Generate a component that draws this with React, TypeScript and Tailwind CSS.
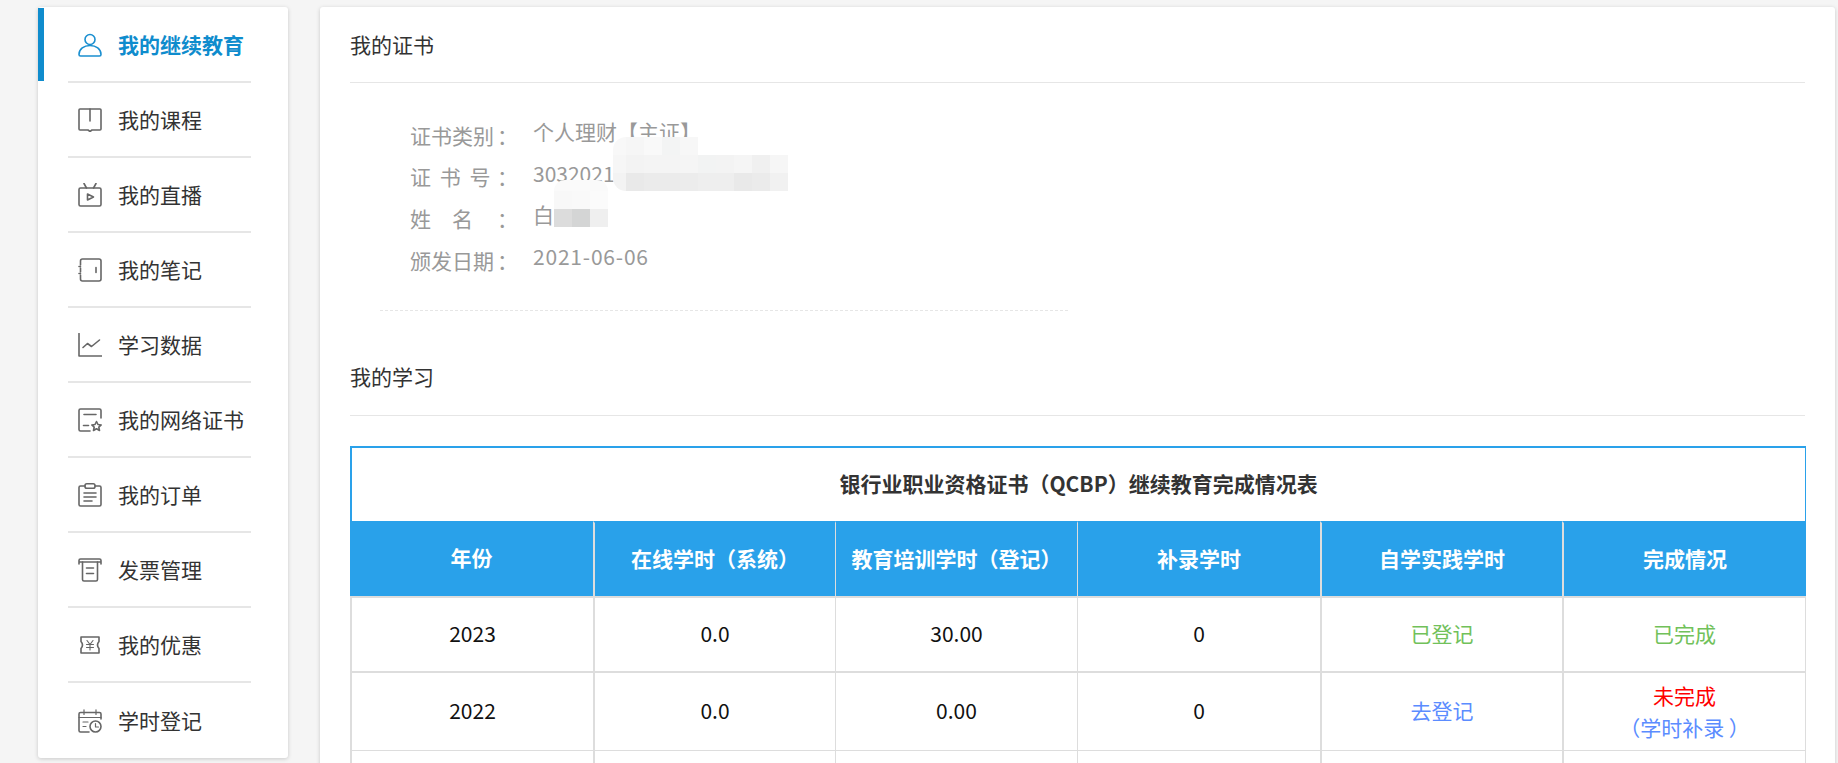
import type { ReactNode } from "react";

const ICON = "#666666";

function Icon({ color = ICON, children }: { color?: string; children: ReactNode }) {
  return (
    <svg width="24" height="24" viewBox="0 0 24 24" fill="none" stroke={color} strokeWidth="1.6" strokeLinecap="round" strokeLinejoin="round" className="shrink-0">
      {children}
    </svg>
  );
}

const menus: { label: string; active?: boolean; icon: ReactNode }[] = [
  {
    label: "我的继续教育",
    active: true,
    icon: (
      <>
        <circle cx="12" cy="6.5" r="5" />
        <path d="M1 21.5C1 16 6 12.5 12 12.5S23 16 23 21.5Q23 23 21.5 23H2.5Q1 23 1 21.5Z" />
      </>
    ),
  },
  {
    label: "我的课程",
    icon: (
      <>
        <path d="M2 1H22Q23 1 23 2V21Q23 22 22 22H14L12 23.5L10 22H2Q1 22 1 21V2Q1 1 2 1Z" />
        <path d="M12 1V13" />
      </>
    ),
  },
  {
    label: "我的直播",
    icon: (
      <>
        <rect x="1" y="5" width="22" height="18" rx="1.5" />
        <path d="M6 0.5L8.5 5M18 0.5L15.5 5" />
        <path d="M9.5 11L15.5 14L9.5 17Z" />
      </>
    ),
  },
  {
    label: "我的笔记",
    icon: (
      <>
        <path d="M2.5 7V3Q2.5 1 4.5 1H21Q23 1 23 3V21Q23 23 21 23H4.5Q2.5 23 2.5 21V17M2.5 10V14" />
        <path d="M1 8.5H2.5M1 15.5H2.5M18 9.5V14.5" />
      </>
    ),
  },
  {
    label: "学习数据",
    icon: (
      <>
        <path d="M1 0.5V23H23.5" />
        <path d="M5 14.5L9.5 10.5L13.5 13.5L21.5 7" />
      </>
    ),
  },
  {
    label: "我的网络证书",
    icon: (
      <>
        <path d="M23 10V2.5Q23 1 21.5 1H2.5Q1 1 1 2.5V21.5Q1 23 2.5 23H12" />
        <path d="M6 6.5H18M5.5 17.5H10.5" />
        <path d="M18.5 13.5L20 16.5L23.2 17L20.8 19.2L21.5 22.5L18.5 20.8L15.5 22.5L16.2 19.2L13.8 17L17 16.5Z" />
      </>
    ),
  },
  {
    label: "我的订单",
    icon: (
      <>
        <path d="M7 3H2.5Q1 3 1 4.5V21.5Q1 23 2.5 23H21.5Q23 23 23 21.5V4.5Q23 3 21.5 3H17" />
        <rect x="7" y="0.8" width="10" height="4.4" rx="1.8" />
        <path d="M6 10H18M6 14H18M6 18H14" />
      </>
    ),
  },
  {
    label: "发票管理",
    icon: (
      <>
        <path d="M1 6V2.5Q1 1 2.5 1H21.5Q23 1 23 2.5V6M1 4H23" />
        <path d="M4.5 4V21.5Q4.5 23 6 23H18Q19.5 23 19.5 21.5V4" />
        <path d="M8.5 10H15.5M8.5 15.5H15.5" />
      </>
    ),
  },
  {
    label: "我的优惠",
    icon: (
      <>
        <path d="M3 4H21V8.5Q18 12 21 15.5V20H3V15.5Q6 12 3 8.5Z" />
        <path d="M9 7.5L12 11.5L15 7.5M12 11.5V17M8.5 11.5H15.5M8.5 14.5H15.5" strokeWidth="1.1" />
      </>
    ),
  },
  {
    label: "学时登记",
    icon: (
      <>
        <path d="M23 10V5Q23 3.5 21.5 3.5H2.5Q1 3.5 1 5V21.5Q1 23 2.5 23H11" />
        <path d="M6 0.8V5.5M18 0.8V5.5M1 8.5H23M5 13H10M5 17.5H8" strokeWidth="1.2" />
        <circle cx="17.5" cy="17.5" r="5.5" />
        <path d="M17.5 14.5V18H20.5" strokeWidth="1.2" />
      </>
    ),
  },
];

const info = [
  { label: "证书类别", value: "个人理财【主证】", cls: "" },
  { label: "证 书 号", value: "3032021", cls: "" },
  { label: "姓\u3000名", value: "白", cls: "" },
  { label: "颁发日期", value: "2021-06-06", cls: "tracking-[0.8px]" },
];

const heads = ["年份", "在线学时（系统）", "教育培训学时（登记）", "补录学时", "自学实践学时", "完成情况"];

// mosaic cover, one colour per 18px block ("" = nothing drawn)
const mosaicCert = [
  ["", "#f6f6f6", "#f9f9f9", "#f3f4f4", "#f7f7f7", "", "", "", "", ""],
  ["", "#f3f3f3", "#f4f4f4", "#f4f4f4", "#f5f5f5", "#f2f3f3", "#f3f3f3", "#f5f5f5", "#f0f0f0", "#f6f6f6"],
  ["", "#e9e9e9", "#ebebeb", "#ebebeb", "#ececec", "#eeeeee", "#eeeeee", "#e9e9e9", "#ebebeb", "#f1f1f1"],
];
const mosaicName = ["#f8f8f8", "#f9f9f9", "#fbfbfb", "#dcdcdc", "#d4d5d5", "#efefef"];

function Sidebar() {
  return (
    <aside className="relative w-[250px] h-[751px] shrink-0 pt-px bg-white rounded-[3px] shadow-[0_1px_4px_rgba(0,0,0,0.18)]">
      {menus.map((m, i) => (
        <div key={m.label} className="relative h-[75px] pl-[30px] pr-[37px]">
          {m.active && <div className="absolute left-0 top-0 w-[6px] h-[73px] bg-[#0f8ccd]" />}
          <div className={`h-full flex items-center pl-[10px] gap-[16px] ${i < menus.length - 1 ? "border-b-2 border-[#e6e6e6]" : ""}`}>
            {m.active ? <Icon color="#1a8fd0">{m.icon}</Icon> : <Icon>{m.icon}</Icon>}
            <span className={m.active ? "font-bold text-[#0f8ccd]" : "text-[#333]"}>{m.label}</span>
          </div>
        </div>
      ))}
    </aside>
  );
}

function Mosaics() {
  return (
    <>
      <div className="absolute left-[293px] top-[130px] grid grid-cols-[13px_repeat(9,18px)] grid-rows-[18px_18px_18px]">
        {mosaicCert.flatMap((row, r) =>
          row.map((c, k) =>
            k === 0 ? (
              <div
                key={`${r}-${k}`}
                className={
                  r === 0
                    ? "bg-[#f8f8f8] rounded-tl-[13px]"
                    : r === 1
                      ? "bg-[#f6f6f6]"
                      : "bg-[#f3f3f3] rounded-bl-[13px]"
                }
              />
            ) : (
              <div key={`${r}-${k}`} style={{ background: c || undefined }} />
            ),
          ),
        )}
      </div>
      <div className="absolute left-[234px] top-[173px] w-[54px]">
        <div className="h-[11px] bg-[#fafafa] rounded-t-[27px]" />
        <div className="grid grid-cols-[18px_18px_18px] grid-rows-[18px_18px]">
          {mosaicName.map((c, i) => (
            <div key={i} style={{ background: c }} />
          ))}
        </div>
      </div>
    </>
  );
}

function Main() {
  const td = "border-b-2 border-[#dddddd] text-center align-middle";
  const td2 = "border-b border-[#dddddd] text-center align-middle";
  return (
    <main className="relative w-[1515px] h-[800px] shrink-0 ml-[32px] bg-white rounded-[3px] shadow-[0_1px_4px_rgba(0,0,0,0.18)] px-[30px]">
      <h2 className="h-[76px] flex items-center border-b border-[#e6e6e6] text-[#333]">我的证书</h2>
      <div className="pt-[31px] pl-[60px] text-[#999]">
        {info.map((r) => (
          <div key={r.label} className="h-[41.67px] flex items-center">
            <span className="w-[123px] mt-px whitespace-pre">
              <span className="inline-block w-[87px] [word-spacing:4px]">{r.label}</span>：
            </span>
            <span className={`-mt-[6px] ${r.cls}`}>{r.value}</span>
          </div>
        ))}
      </div>
      <div className="ml-[30px] w-[688px] mt-[29px] border-b border-dashed border-[#e6e6e6]" />
      <h2 className="mt-[29px] h-[76px] flex items-center border-b border-[#e6e6e6] text-[#333]">我的学习</h2>
      <table className="mt-[30px] w-[1456px] table-fixed border-separate border-spacing-0 text-[#111]">
        <colgroup>
          <col className="w-[243px]" />
          <col className="w-[242px]" />
          <col className="w-[242px]" />
          <col className="w-[243px]" />
          <col className="w-[242px]" />
          <col className="w-[244px]" />
        </colgroup>
        <thead>
          <tr>
            <th colSpan={6} className="h-[75px] border-t-2 border-l-2 border-r border-[#2aa1ea] font-bold text-[#333]">
              银行业职业资格证书（QCBP）继续教育完成情况表
            </th>
          </tr>
          <tr className="bg-[#29a1ea] text-white">
            <th className="h-[75px] font-bold">{heads[0]}</th>
            <th className="h-[75px] font-bold border-t-2 border-t-[#29a1ea] border-l-2 border-l-[#dddddd]">{heads[1]}</th>
            <th className="h-[75px] font-bold border-t-2 border-t-[#29a1ea] border-l border-l-[#dddddd]">{heads[2]}</th>
            <th className="h-[75px] font-bold border-t-2 border-t-[#29a1ea] border-l border-l-[#dddddd]">{heads[3]}</th>
            <th className="h-[75px] font-bold border-t-2 border-t-[#29a1ea] border-l-2 border-l-[#dddddd]">{heads[4]}</th>
            <th className="h-[75px] font-bold border-t-2 border-t-[#29a1ea] border-l-2 border-l-[#dddddd]">{heads[5]}</th>
          </tr>
        </thead>
        <tbody>
          <tr className="h-[77px]">
            <td className={`${td} border-t-2 border-l-2`}>2023</td>
            <td className={`${td} border-t-2 border-l-2`}>0.0</td>
            <td className={`${td} border-t-2 border-l`}>30.00</td>
            <td className={`${td} border-t-2 border-l`}>0</td>
            <td className={`${td} border-t-2 border-l-2 text-[#71c15a]`}>已登记</td>
            <td className={`${td} border-t-2 border-l-2 border-r text-[#71c15a]`}>已完成</td>
          </tr>
          <tr className="h-[78px]">
            <td className={`${td2} border-l-2`}>2022</td>
            <td className={`${td2} border-l-2`}>0.0</td>
            <td className={`${td2} border-l`}>0.00</td>
            <td className={`${td2} border-l`}>0</td>
            <td className={`${td2} border-l-2 text-[#5b8cff]`}>去登记</td>
            <td className={`${td2} border-l-2 border-r leading-[32px]`}>
              <div className="text-[#ff0000]">未完成</div>
              <div className="text-[#5b8cff]">（学时补录 ）</div>
            </td>
          </tr>
          <tr className="h-[60px]">
            <td className={`${td} border-l-2`} />
            <td className={`${td} border-l-2`} />
            <td className={`${td} border-l`} />
            <td className={`${td} border-l`} />
            <td className={`${td} border-l-2`} />
            <td className={`${td} border-l-2 border-r`} />
          </tr>
        </tbody>
      </table>
      <Mosaics />
    </main>
  );
}

export default function App() {
  return (
    <div className="h-screen overflow-hidden bg-[#f5f5f5] flex pl-[38px] pt-[7px] text-[21px] font-['Noto_Sans_CJK_SC','Microsoft_YaHei',sans-serif]">
      <Sidebar />
      <Main />
    </div>
  );
}
